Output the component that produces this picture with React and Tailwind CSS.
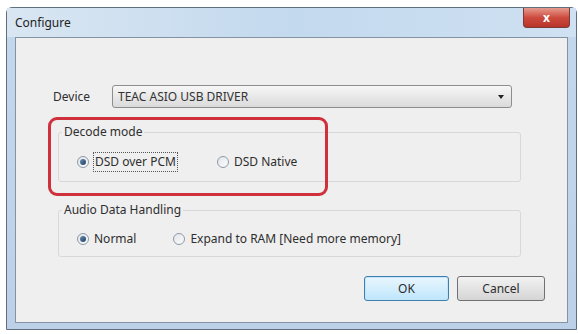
import React from 'react';

function Radio({ checked, label, focused }) {
  return (
    <label className="flex items-center gap-[5px]">
      <span className="flex h-[12px] w-[12px] items-center justify-center rounded-full border border-[#8e9aa6] bg-gradient-to-br from-[#e2e6ea] to-[#fbfbfb]">
        {checked && <span className="h-[6px] w-[6px] rounded-full bg-gradient-to-br from-[#6d8fb0] to-[#1e3f63]" />}
      </span>
      <span className={focused ? 'outline outline-1 outline-dotted outline-[#555] px-[1px]' : ''}>{label}</span>
    </label>
  );
}

export default function App() {
  return (
    <div
      className="h-[334px] w-[578px] bg-white pl-[6px] pt-[7px] text-[12px] text-[#2e2e2e]"
      style={{ fontFamily: '"Noto Sans", "Open Sans", sans-serif' }}
    >
      <div className="flex h-[323px] w-[571px] flex-col rounded-t-[6px] border border-[#5f6f80] bg-gradient-to-b from-[#c4d8ec] to-[#bcd1e8]">
        {/* title bar */}
        <div className="relative flex h-[29px] items-center bg-gradient-to-r from-[#d9e6f2] via-[#c3d9ee] to-[#cfe1f2] pl-[8px]">
          <span className="text-[12px] text-[#222]">Configure</span>
          <div className="absolute right-[6px] top-0 flex h-[20px] w-[47px] items-center justify-center rounded-b-[4px] border border-t-0 border-[#7a3a36] bg-gradient-to-b from-[#e59a8f] via-[#cc4b3e] to-[#b8342a]">
            <span className="text-[12px] font-bold leading-none text-white">x</span>
          </div>
        </div>

        {/* client area */}
        <div className="flex flex-1 px-[8px] pb-[6px]">
          <div className="relative flex-1 border border-[#8493a3] bg-[#efefef]">
            <div className="flex items-center pl-[37px] pt-[47px]">
              <span className="w-[59px]">Device</span>
              <div className="flex h-[23px] w-[400px] items-center justify-between rounded-[3px] border border-[#8d8d8d] bg-gradient-to-b from-[#f7f7f7] to-[#dadada] pl-[5px] pr-[7px]">
                <span className="text-[#333]">TEAC ASIO USB DRIVER</span>
                <span className="h-0 w-0 border-x-[3px] border-t-[4px] border-x-transparent border-t-[#222]" />
              </div>
            </div>

            <fieldset className="ml-[42px] mt-[16px] h-[58px] w-[463px] rounded-[3px] border border-[#d8d8d8]">
              <legend className="ml-[3px] px-[2px] leading-[16px]">Decode mode</legend>
              <div className="flex gap-[40px] pl-[18px] pt-[13px]">
                <Radio checked label="DSD over PCM" focused />
                <Radio label="DSD Native" />
              </div>
            </fieldset>

            <fieldset className="ml-[42px] mt-[20px] h-[55px] w-[463px] rounded-[3px] border border-[#d8d8d8]">
              <legend className="ml-[3px] px-[2px] leading-[16px]">Audio Data Handling</legend>
              <div className="flex gap-[37px] pl-[18px] pt-[12px]">
                <Radio checked label="Normal" />
                <Radio label="Expand to RAM [Need more memory]" />
              </div>
            </fieldset>

            <div className="mt-[19px] flex justify-end gap-[8px] pr-[22px]">
              <button className="h-[25px] w-[85px] rounded-[3px] border border-[#3c7fb1] bg-gradient-to-b from-[#eaf6fd] to-[#bee6fd] shadow-[inset_0_0_0_1px_#c6e4f7]">
                OK
              </button>
              <button className="h-[25px] w-[88px] rounded-[3px] border border-[#707070] bg-gradient-to-b from-[#f2f2f2] to-[#d5d5d5]">
                Cancel
              </button>
            </div>

            {/* red highlight annotation */}
            <div className="absolute left-[32px] top-[79px] h-[79px] w-[280px] rounded-[9px] border-[3px] border-[#d02f3c]" />
          </div>
        </div>
      </div>
    </div>
  );
}
